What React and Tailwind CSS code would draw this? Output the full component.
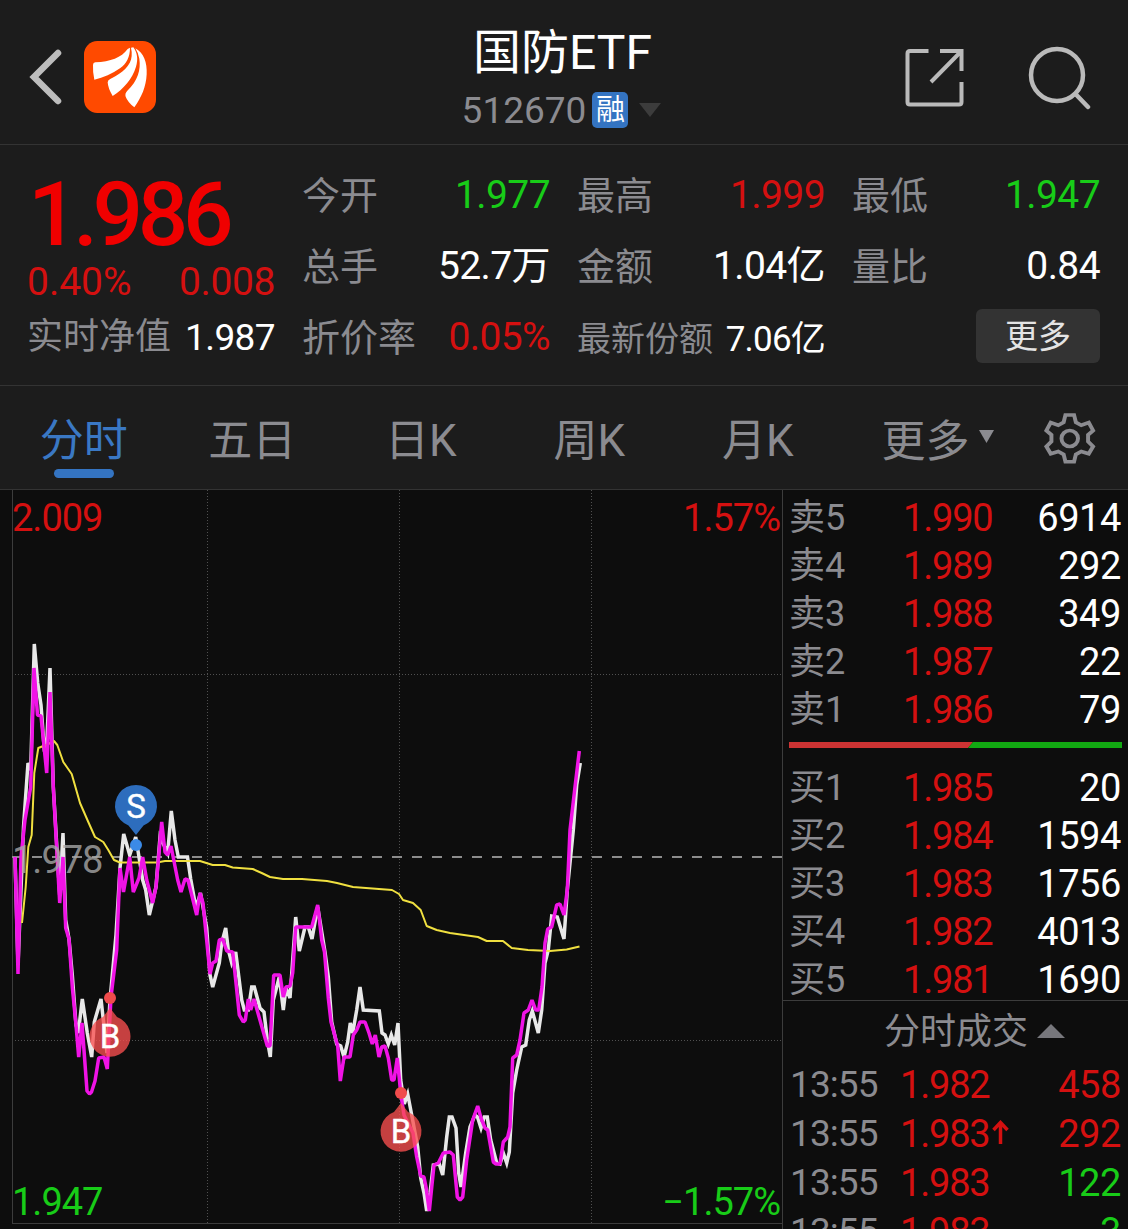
const averageLine =
  '22,923 25.7,887 28.3,847 31.7,835 34.3,773 38.3,748 43.3,746 48.3,744 54,741 57.3,745 63.3,762 71.7,774 80,803 88.3,822 95,837 103.3,842 108.3,850 114,860 120,862.5 157,862.5 165,861 200,861 212.7,865 225,865 232.7,867.5 252.7,869 261.7,873 270,877 283,879 302,879 327,881 337,883 353,887 392,890 399,894 403,900 413,903 420.7,910 426.7,926 436.7,930 450,933 478,937 486.7,941 503,941 511.7,948 528,950 550,951 566.7,949.5 579.5,946.5';

const priceLine =
  '15,857 18,965 23.5,827 28,763 30.7,770 34.3,644 37.7,683 41,705 44.3,750 46.5,750 50,668 53.3,787 59.7,895 63,833 65.7,920 69,939 72.3,975 76,1025 78.3,1033 82.3,999 87.3,1033 91.7,1057 94.3,1022 101,999 107,1053 110,1000 116,935 120,868 123.7,834 129.7,855 135.7,837 139,857 142.7,880 145.7,890 149.3,915 156,887 160,837 167.7,853 171.3,811 175,840 178.3,857 187.5,857 190.7,879 196,908 200.5,893 206.7,928 210,975 212.7,987 219.3,963 221.7,943 225.7,928 228.3,950 231.7,963 235.7,952 241.7,1000 244.3,1010 248.3,1010 251.7,987 254.3,987 260,1008 264,1012 267.3,1040 270.3,1057 273.3,1000 279.3,977 283.3,1010 286,988 290,998 295.7,917 299.3,951 305,927 308.3,927 312,939 317.7,907 325,952 328.3,977 331.7,1022 336.7,1044 340.7,1046 344,1057 347.7,1042 350.3,1023 352.7,1033 356.7,1010 360,987 363.3,1010 379.3,1011 382,1033 385,1035 388.3,1044 391.3,1035 394.7,1045 398,1023 400.7,1080 404.3,1104 407.7,1094 411.7,1115 417.7,1147 420.7,1178 424,1193 426.7,1211 430,1193 433.3,1165 439.3,1164 442.7,1175 446.7,1137 449.3,1117 452,1117 456,1128 458.7,1173 461,1187 465.7,1153 470,1127 475,1115 477.5,1117 481,1128 484.3,1117 487.3,1117 490.7,1140 496.7,1163 500,1164 503.3,1153 506.7,1163 509.3,1152 512.7,1093 516.7,1070 521.7,1047 525.7,1045 529.3,1020 532.3,1011 538.3,1033 541.7,1010 545,963 548.3,950 551.7,916 557.3,917 564,939 567.3,890 573.3,830 576.7,785 580.3,763';

const indexLine =
  '15,857 18,974 21,857 25,820 30.7,787 34,668 37.5,715 41,716 46.7,773 50,692 53.3,787 59.7,903 63,857 65.7,928 69,939 72.3,987 76,1025 78.7,1057 82,1023 87,1091 89.5,1094 91.5,1092 95,1081 98.7,1058 104,1057 107.3,1069 111,997 116.7,950 120,868 123.5,892 129.7,857 133.3,892 139,878 142.7,857 146.7,880 152.7,903 156,887 161.7,822 165,852 167.7,855 171,846 177.7,880 181,892 185,879 188,880 196.7,915 200,893 203,903 210,974 212.7,963 216,961 219.3,940 222.7,939 226.7,951 232.7,952 236,983 239.3,1015 243.3,1022 245.3,1020 248.3,999 250.7,1010 254,999 267.3,1046 270,1046 273.7,975 280,975 283.3,997 286,987 290,986 292.7,973 295.7,927 311.7,927 317.7,905 321.7,940 324.5,952 328.3,998 331,1022 337.7,1046 340.3,1081 344,1057 350,1057 353.3,1035 356.7,1030 360,1022 365,1022 369,1033 372.3,1044 375.3,1035 379,1057 381.7,1047 385,1046 388.3,1058 391.7,1080 394,1080 397.3,1058 400.7,1093 404,1115 413,1133 416.7,1157 420.7,1176 424,1177 426,1187 429.3,1211 434,1165 438.3,1163 443.3,1153 450,1152 453.3,1155 457.3,1197 460,1200 462.7,1197 466.7,1160 472.7,1120 477.7,1106 481,1118 485,1128 487.7,1130 493.3,1162 496,1164 500,1164 503.3,1142 507.7,1137 510,1127 512.7,1058 516.7,1055 520,1040 524,1013 528.3,1010 532,1000 535.7,1010 538.7,1010 542,987 545,943 547.7,929 551.7,927 556.7,905 560,904 564,915 567.3,890 570,830 575,787 579.3,751';

const sells = [
  ['卖5', '1.990', '6914'],
  ['卖4', '1.989', '292'],
  ['卖3', '1.988', '349'],
  ['卖2', '1.987', '22'],
  ['卖1', '1.986', '79'],
];

const buys = [
  ['买1', '1.985', '20'],
  ['买2', '1.984', '1594'],
  ['买3', '1.983', '1756'],
  ['买4', '1.982', '4013'],
  ['买5', '1.981', '1690'],
];

const trades = [
  { time: '13:55', price: '1.982', volume: '458', up: true },
  { time: '13:55', price: '1.983', volume: '292', up: true, arrow: true },
  { time: '13:55', price: '1.983', volume: '122', up: false },
  { time: '13:55', price: '1.983', volume: '3', up: false },
];

const tabs = ['分时', '五日', '日K', '周K', '月K'];

function Stat({ label, value, color = 'text-white' }) {
  return (
    <div className="flex h-[71px] items-center justify-between whitespace-nowrap">
      <span className="-ml-px text-[38px] text-[#8b8b90]">{label}</span>
      <span className={`text-[39px] tracking-[-0.6px] ${color}`}>{value}</span>
    </div>
  );
}

function Header() {
  return (
    <header className="flex h-[145px] items-center justify-between border-b border-[#333] pl-[29px] pr-[36px]">
      <div className="flex w-[300px] items-center gap-[22px] pt-[10px]">
        <svg className="h-[56px] w-[33px]" viewBox="0 0 33 56" fill="none" stroke="#bdbdbd" strokeWidth="6.5">
          <path d="M29 4 L5 28 L29 52" strokeLinecap="round" />
        </svg>
        <svg className="h-[72px] w-[72px]" viewBox="0 0 216 216">
          <rect width="216" height="216" rx="40" fill="#ff4a00" />
          <g fill="#fff">
            <path d="M27 72 Q27 65 34 64 C80 62 112 50 131 24 L138 20 C138 48 128 67 108 82 C85 98 58 110 31 116 Q26 94 27 72Z" />
            <path d="M141 20 L148 19 C160 35 163 56 156 77 C145 114 119 143 86 165 Q72 142 71 124 Q71 117 80 113 C116 96 141 73 143 45 Q144 32 141 20Z" />
            <path d="M154 22 C179 36 190 64 188 100 C186 138 173 168 151 199 Q131 183 125 167 Q122 157 130 149 C161 120 171 86 166 53 Q163 36 154 22Z" />
          </g>
        </svg>
      </div>

      <div className="flex flex-col items-center pl-1 pt-[14px]">
        <h1 className="h-[62px] whitespace-nowrap text-[48px] leading-[60px] text-white">国防ETF</h1>
        <div className="flex h-[50px] items-center pr-[2px]">
          <span className="text-[37px] text-[#8b8b90]">512670</span>
          <span className="ml-[6px] flex h-[36px] w-[36px] items-center justify-center rounded-[5px] bg-[#3474c2] text-[29px] text-white">
            融
          </span>
          <svg className="ml-[11px] h-[14px] w-[22px]" viewBox="0 0 22 14">
            <path d="M0 0H22L11 14Z" fill="#3c3c3c" />
          </svg>
        </div>
      </div>

      <div className="flex w-[300px] items-center justify-end gap-[64px] pt-[11px]">
        <svg className="h-[60px] w-[60px]" viewBox="0 0 60 60" fill="none" stroke="#bababa" strokeWidth="4">
          <path d="M24.500 3H6Q3.500 3 3.500 5.500V54Q3.500 56.500 6 56.500H55Q57.500 56.500 57.500 54V34" />
          <path d="M36 3H57.500V23M57 3.500L27 34" />
        </svg>
        <svg className="h-[64px] w-[64px]" viewBox="0 0 64 64" fill="none" stroke="#bababa" strokeWidth="4.500">
          <circle cx="29" cy="29" r="26" />
          <path d="M47.500 48L60 61" strokeLinecap="round" />
        </svg>
      </div>
    </header>
  );
}

function Summary() {
  return (
    <section className="grid h-[241px] grid-cols-4 items-start gap-x-7 border-b border-[#333] px-7 pt-[15px]">
      <div>
        <div className="flex h-[110px] items-center text-[89px] font-medium leading-[76px] tracking-[-5.4px] text-[#f00000]">1.986</div>
        <div className="flex h-[25px] items-center justify-between text-[39px] text-[#d41010]">
          <span className="-ml-px">0.40%</span>
          <span className="tracking-[-0.4px]">0.008</span>
        </div>
        <div className="flex h-[84px] items-center justify-between whitespace-nowrap">
          <span className="-ml-px text-[36px] text-[#8b8b90]">实时净值</span>
          <span className="text-[37px] tracking-[-0.6px] text-white">1.987</span>
        </div>
      </div>
      <div>
        <Stat label="今开" value="1.977" color="text-[#18cc18]" />
        <Stat label="总手" value="52.7万" />
        <Stat label="折价率" value="0.05%" color="text-[#d41010]" />
      </div>
      <div>
        <Stat label="最高" value="1.999" color="text-[#d41010]" />
        <Stat label="金额" value="1.04亿" />
        <div className="flex h-[74px] items-center justify-between whitespace-nowrap">
          <span className="-ml-px text-[34px] text-[#8b8b90]">最新份额</span>
          <span className="text-[35px] tracking-[-0.8px] text-white">7.06亿</span>
        </div>
      </div>
      <div>
        <Stat label="最低" value="1.947" color="text-[#18cc18]" />
        <Stat label="量比" value="0.84" />
        <div className="flex h-[68px] items-center justify-end">
          <button className="h-[54px] w-[124px] rounded-md bg-[#333] text-[33px] text-[#e4e4e4]">更多</button>
        </div>
      </div>
    </section>
  );
}

function Tabs() {
  return (
    <nav className="flex h-[104px] border-b border-[#333] text-[44px] text-[#8b8b90]">
      {tabs.map((tab, i) => (
        <div key={tab} className="flex w-[168.500px] flex-col items-center pt-[23px]">
          <span className={`-ml-px h-[60px] leading-[65px] ${i === 0 ? 'text-[#3a78c4]' : ''}`}>{tab}</span>
          {i === 0 && <span className="h-[9px] w-[60px] rounded-full bg-[#3474c2]" />}
        </div>
      ))}
      <div className="flex h-[111px] w-[198px] items-center gap-[9px] pl-[39px]">
        <span>更多</span>
        <svg className="-mt-[10px] h-[13px] w-[15px]" viewBox="0 0 15 13">
          <path d="M0 0H15L7.500 13Z" fill="#8b8b90" />
        </svg>
      </div>
      <svg
        className="mt-[24px] h-[57px] w-[57.500px]"
        viewBox="1325 60 160 172"
        preserveAspectRatio="none"
        fill="none"
        stroke="#8b8b90"
        strokeWidth="11"
      >
        <path d="M1393 75H1417L1422 97L1437 106L1458 98L1470 122L1456 135V155L1470 170L1458 192L1437 185L1422 194L1417 216H1393L1388 194L1373 185L1352 192L1340 170L1354 155V135L1340 122L1352 98L1373 106L1388 97Z" />
        <ellipse cx="1405" cy="146" rx="23" ry="24" />
      </svg>
    </nav>
  );
}

function BuyMarker({ x, y }) {
  return (
    <g transform={`translate(${x} ${y})`}>
      <circle r="6" fill="#f04c4c" />
      <path d="M0 10 L7 19 A20.500 20.500 0 1 1 -7 19Z" fill="#fa5050" fillOpacity="0.780" />
      <text y="50" fontSize="33" fill="#fff" stroke="#fff" strokeWidth="0.400" textAnchor="middle">B</text>
    </g>
  );
}

function Chart() {
  return (
    <svg className="h-[739px] w-[783px] shrink-0" viewBox="0 490 783 739" fill="none">
      <g stroke="#3c3c3c">
        <path d="M12.500 490V1223M782.500 490V1229M12 1223.500H783" />
        <path d="M207.500 490V1223M399.500 490V1223M591.500 490V1223M15 674.500H782M15 1040.500H782" strokeDasharray="1 2" stroke="#505050" />
      </g>
      <path d="M12 857H782" stroke="#8c8c8c" strokeWidth="2" strokeDasharray="10 10" />
      <polyline points={priceLine} stroke="#e8e8e8" strokeWidth="3.500" />
      <polyline points={averageLine} stroke="#f0e040" strokeWidth="2" strokeLinejoin="round" />
      <polyline points={indexLine} stroke="#f013e6" strokeWidth="3.500" strokeLinejoin="bevel" />

      <g fontSize="38" letterSpacing="-1">
        <text x="12" y="530.500" fill="#d41010">2.009</text>
        <text x="780" y="530.500" fill="#d41010" textAnchor="end">1.57%</text>
        <text x="12" y="872.500" fill="#a8a8a8" fillOpacity="0.800">1.978</text>
        <text x="12" y="1214.500" fill="#18cc18">1.947</text>
        <text x="780" y="1214.500" fill="#18cc18" textAnchor="end">−1.57%</text>
      </g>

      <path d="M128.500 825.500 A21 21 0 1 1 143.500 825.500 L136 835Z" fill="#2d6dbd" />
      <circle cx="136" cy="845" r="6" fill="#3b8ae6" />
      <text x="136" y="818" fontSize="33" fill="#fff" stroke="#fff" strokeWidth="0.400" textAnchor="middle">S</text>
      <BuyMarker x={110} y={998} />
      <BuyMarker x={401} y={1093} />
    </svg>
  );
}

function Level({ row }) {
  const [label, price, volume] = row;
  return (
    <li className="flex h-12 items-center text-[38px]">
      <span className="-ml-px w-[114px] text-[36px] text-[#8b8b90]">{label}</span>
      <span className="tracking-[-1.2px] text-[#d41010]">{price}</span>
      <span className="ml-auto tracking-[-0.4px] text-white">{volume}</span>
    </li>
  );
}

function OrderBook() {
  return (
    <aside className="min-w-0 flex-1 pt-1">
      <ul className="pl-[7px] pr-[7px]">
        {sells.map((row) => <Level key={row[0]} row={row} />)}
      </ul>
      <svg className="ml-[6px] mt-[8px] block h-[6px] w-[333px]" viewBox="0 0 333 6">
        <path d="M0 0H184L179 6H0Z" fill="#cc3333" />
        <path d="M184 0H333V6H179Z" fill="#12a812" />
      </svg>
      <ul className="-mb-[4px] mt-[16px] pl-[7px] pr-[7px]">
        {buys.map((row) => <Level key={row[0]} row={row} />)}
      </ul>
      <div className="flex h-[60px] items-center justify-center gap-[9px] border-t border-[#3c3c3c] pl-[38px] pt-[2px] text-[36px] text-[#8b8b90]">
        <span>分时成交</span>
        <svg className="-mt-[2px] h-[14px] w-[28px]" viewBox="0 0 28 14">
          <path d="M0 14H28L14 0Z" fill="#77777c" />
        </svg>
      </div>
      <ul className="pl-[7px] pr-[7px]">
        {trades.map((trade, i) => (
          <li key={i} className="flex h-[49px] items-center text-[38px] text-[#d41010]">
            <span className="w-[110px] text-[37px] tracking-[-0.9px] text-[#8b8b90]">{trade.time}</span>
            <span className="tracking-[-1.2px]">{trade.price}</span>
            {trade.arrow && (
              <svg className="-mt-[4px] ml-[3px] h-[24px] w-[17px]" viewBox="0 0 17 24" fill="none" stroke="#d41010" strokeWidth="3.500">
                <path d="M8.500 24V3M1.500 10L8.500 2.500L15.500 10" />
              </svg>
            )}
            <span className={`ml-auto tracking-[-0.4px] ${trade.up ? '' : 'text-[#18cc18]'}`}>{trade.volume}</span>
          </li>
        ))}
      </ul>
    </aside>
  );
}

export default function App() {
  return (
    <div
      lang="zh-CN"
      className="h-[1229px] w-[1128px] overflow-hidden bg-[#1c1c1c] font-[Roboto,'Noto_Sans_CJK_SC',sans-serif] leading-none"
    >
      <Header />
      <Summary />
      <Tabs />
      <main className="flex h-[739px] bg-[#0d0d0d]">
        <Chart />
        <OrderBook />
      </main>
    </div>
  );
}
